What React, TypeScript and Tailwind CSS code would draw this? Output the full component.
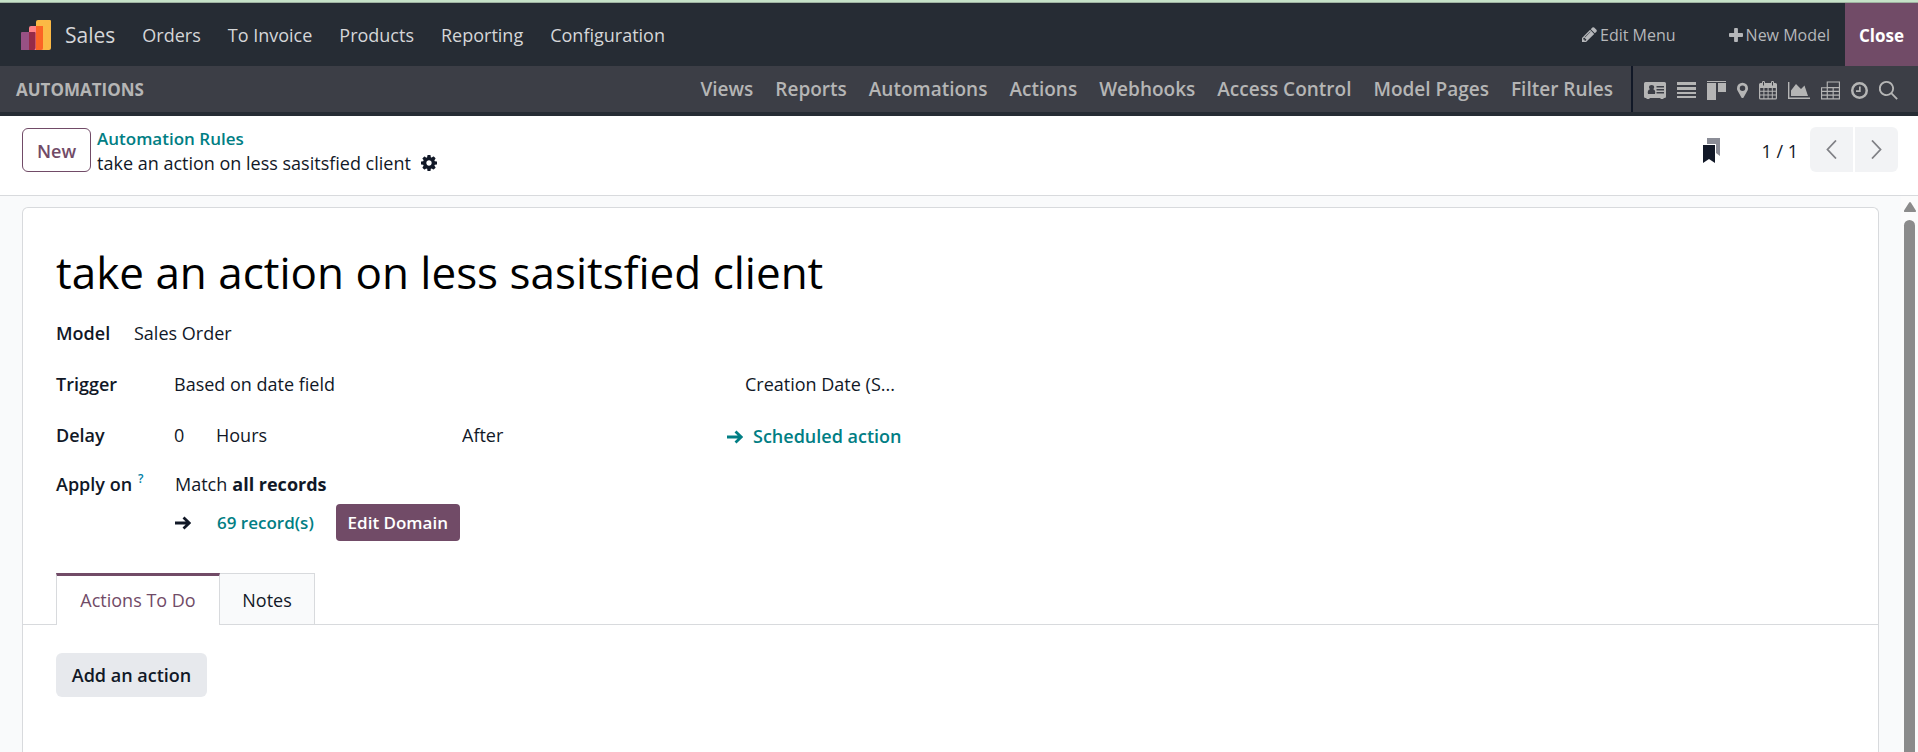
import type { ReactNode } from "react"

const menus = ["Orders", "To Invoice", "Products", "Reporting", "Configuration"]

const studioMenus = [
  "Views",
  "Reports",
  "Automations",
  "Actions",
  "Webhooks",
  "Access Control",
  "Model Pages",
  "Filter Rules",
]

const views: { name: string; width: string; viewBox: string; icon: ReactNode }[] = [
  {
    name: "Form",
    width: "w-[22px]",
    viewBox: "0 0 22 19",
    icon: (
      <path
        fillRule="evenodd"
        d="M1.5 1h19A1.5 1.5 0 0 1 22 2.500v13a1.500 1.500 0 0 1-1.500 1.500h-1v1h-3v-1h-11v1h-3v-1h-1A1.500 1.500 0 0 1 0 15.500v-13A1.500 1.500 0 0 1 1.500 1zM4 13h7c.8-2.600-.3-4.400-1.800-4.700.7-.6 1-1.300 1-2C10.200 4.900 9.100 4 7.600 4S5 4.900 5 6.300c0 .7.300 1.400 1 2-1.600.3-2.800 2.100-2 4.700zM12.500 5v1.500H20V5zm0 3v1.500H20V8zm0 3v1.500H20V11z"
      />
    ),
  },
  {
    name: "List",
    width: "w-[19px]",
    viewBox: "0 0 19 19",
    icon: <path d="M0 1h19v3H0zM0 6h19v3H0zM0 11h19v2H0zM0 15h19v2H0z" />,
  },
  {
    name: "Kanban",
    width: "w-[19px]",
    viewBox: "0 0 19 19",
    icon: <path d="M0 0h19v1H0zM0 2h9v17H0zM11 2h8v9h-8z" />,
  },
  {
    name: "Map",
    width: "w-[11px]",
    viewBox: "0 0 12 19",
    icon: (
      <path
        fillRule="evenodd"
        d="M6 1a6 6 0 0 1 6 6c0 1-.1 1.600-.4 2.200L7.200 17a1.400 1.400 0 0 1-2.400 0L.4 9.200C.1 8.600 0 8 0 7a6 6 0 0 1 6-6zm0 3a3 3 0 1 0 0 6 3 3 0 0 0 0-6z"
      />
    ),
  },
  {
    name: "Calendar",
    width: "w-[18px]",
    viewBox: "0 0 18 19",
    icon: (
      <path
        fillRule="evenodd"
        d="M1.500 2H3V1.300C3 .5 3.700 0 4.500 0S6 .5 6 1.300V2h6v-.7c0-.8.7-1.300 1.500-1.300S15 .5 15 1.300V2h1.500A1.500 1.500 0 0 1 18 3.500v13.500a1.500 1.500 0 0 1-1.500 1.500h-15A1.500 1.500 0 0 1 0 17V3.500A1.500 1.500 0 0 1 1.500 2zM4 1v3.500h1V1zm9 0v3.500h1V1zM1.200 7v2.800h3.200V7zm4.200 0v2.800h3.200V7zm4.200 0v2.800h3.200V7zm4.200 0v2.800h3V7zM1.200 10.800v2.600h3.200v-2.600zm4.200 0v2.600h3.200v-2.600zm4.200 0v2.600h3.200v-2.600zm4.200 0v2.600h3v-2.600zM1.200 14.400v2.800h3.200v-2.800zm4.200 0v2.800h3.200v-2.800zm4.200 0v2.800h3.200v-2.800zm4.200 0v2.800h3v-2.800z"
      />
    ),
  },
  {
    name: "Graph",
    width: "w-[22px]",
    viewBox: "0 0 22 19",
    icon: <path d="M0 1h1.400v15.600H22V18H0zM3 15V9.500L8 3l5 5 3.500-3.500L20 15z" />,
  },
  {
    name: "Pivot",
    width: "w-[19px]",
    viewBox: "0 0 20 19",
    icon: (
      <path
        fillRule="evenodd"
        d="M6 0h14v19H0V6h6zm1.200 1.200v4.500h11.600V1.200zM1.200 7v2.800H6V7zm6 0v2.800h5V7zm6.200 0v2.800h5.400V7zM1.200 11v2.700H6V11zm6 0v2.700h5V11zm6.200 0v2.700h5.400V11zM1.200 14.900v2.700H6v-2.700zm6 0v2.700h5v-2.700zm6.200 0v2.700h5.400v-2.700z"
      />
    ),
  },
  {
    name: "Activity",
    width: "w-[17px]",
    viewBox: "0 0 17 19",
    icon: (
      <path
        fillRule="evenodd"
        d="M8.500 1a8.500 8.500 0 1 1 0 17 8.500 8.500 0 0 1 0-17zm0 2.500a6 6 0 1 0 0 12 6 6 0 0 0 0-12zM8 5.500h1.700V11H5V9.300h3z"
      />
    ),
  },
  {
    name: "Search",
    width: "w-[19px]",
    viewBox: "0 0 19 19",
    icon: (
      <path
        fillRule="evenodd"
        d="M7.500 0a7.500 7.500 0 0 1 5.900 12.100l5.400 5.300-1.300 1.300-5.400-5.400A7.500 7.500 0 1 1 7.500 0zm0 1.800a5.700 5.700 0 1 0 0 11.400 5.700 5.700 0 0 0 0-11.400z"
      />
    ),
  },
]

function SalesLogo() {
  return (
    <svg className="h-[30px] w-[30px]" viewBox="0 0 30 30" aria-hidden="true">
      <path d="M17 0h12a1 1 0 0 1 1 1v27a2 2 0 0 1-2 2H15V2a2 2 0 0 1 2-2z" fill="#fbb945" />
      <path d="M10 6h12v22a2 2 0 0 1-2 2H8V8a2 2 0 0 1 2-2z" fill="#ff8087" />
      <path d="M15 6h7v22a2 2 0 0 1-2 2h-5z" fill="#fb6425" />
      <path d="M1 12h13v16a2 2 0 0 1-2 2H0V13a1 1 0 0 1 1-1z" fill="#985184" />
      <path d="M8 12h5.500a1 1 0 0 1 1 1v15a2 2 0 0 1-2 2H8z" fill="#962b48" />
    </svg>
  )
}

function PencilIcon() {
  return (
    <svg className="h-[15px] w-[15px]" viewBox="128 128 1536 1536" fill="currentColor" aria-hidden="true">
      <path d="M491 1536l91-91-235-235-91 91v107h128v128h107zm523-928q0-22-22-22-10 0-17 7l-542 542q-7 7-7 17 0 22 22 22 10 0 17-7l542-542q7-7 7-17zm-54-192l416 416-832 832h-416v-416zm683 96q0 53-37 90l-166 166-416-416 166-165q36-38 90-38 53 0 91 38l235 234q37 39 37 91z" />
    </svg>
  )
}

function PlusIcon() {
  return (
    <svg className="h-3.5 w-3.5" viewBox="192 128 1408 1408" fill="currentColor" aria-hidden="true">
      <path d="M1600 736v192q0 40-28 68t-68 28h-416v416q0 40-28 68t-68 28h-192q-40 0-68-28t-28-68v-416h-416q-40 0-68-28t-28-68v-192q0-40 28-68t68-28h416v-416q0-40 28-68t68-28h192q40 0 68 28t28 68v416h416q40 0 68 28t28 68z" />
    </svg>
  )
}

function CogIcon() {
  return (
    <svg className="h-4 w-4" viewBox="128 128 1536 1536" fill="currentColor" aria-hidden="true">
      <path d="M1152 896q0-106-75-181t-181-75-181 75-75 181 75 181 181 75 181-75 75-181zm512-109v222q0 12-8 23t-20 13l-185 28q-19 54-39 91 35 50 107 138 10 12 10 25t-9 23q-27 37-99 108t-94 71q-12 0-26-9l-138-108q-44 23-91 38-16 136-29 186-7 28-36 28h-222q-14 0-24.500-8.500t-11.500-21.500l-28-184q-49-16-90-37l-141 107q-10 9-25 9-14 0-25-11-126-114-165-168-7-10-7-23 0-12 8-23 15-21 51-66.500t54-70.500q-27-50-41-99l-183-27q-13-2-21-12.500t-8-23.500v-222q0-12 8-23t19-13l186-28q14-46 39-92-40-57-107-138-10-12-10-24 0-10 9-23 26-36 98.500-107.500t94.500-71.500q13 0 26 10l138 107q44-23 91-38 16-136 29-186 7-28 36-28h222q14 0 24.500 8.500t11.500 21.500l28 184q49 16 90 37l142-107q9-9 24-9 13 0 25 10 129 119 165 170 7 8 7 22 0 12-8 23-15 21-51 66.500t-54 70.500q26 50 41 98l183 28q13 2 21 12.500t8 23.500z" />
    </svg>
  )
}

function ArrowIcon() {
  return (
    <svg
      className="h-[14px] w-4"
      viewBox="0 0 16 14"
      fill="none"
      stroke="currentColor"
      strokeWidth="2.8"
      aria-hidden="true"
    >
      <path d="M0 7h14M8.500 1.500L14.300 7l-5.800 5.500" />
    </svg>
  )
}

function Chevron({ d }: { d: string }) {
  return (
    <svg
      className="h-[19px] w-[11px]"
      viewBox="0 0 11 19"
      fill="none"
      stroke="currentColor"
      strokeWidth="1.8"
      aria-hidden="true"
    >
      <path d={d} />
    </svg>
  )
}

function Navbar() {
  return (
    <header className="flex h-[63px] items-stretch bg-[#262c34] text-[#d5d6d8]">
      <nav className="flex items-center pt-px pl-[21px] text-[18px]">
        <SalesLogo />
        <a href="#sales" className="mr-[27px] ml-[14px] pt-px text-[21px]">
          Sales
        </a>
        <div className="flex gap-[27px]">
          {menus.map((menu) => (
            <a key={menu} href="#menu">
              {menu}
            </a>
          ))}
        </div>
      </nav>
      <div className="ml-auto flex items-stretch text-base text-[#b5b7ba]">
        <button className="mr-[53px] flex items-center gap-[3px]">
          <PencilIcon />
          Edit Menu
        </button>
        <button className="mr-[15px] flex items-center gap-[3px]">
          <PlusIcon />
          New Model
        </button>
        <button className="w-[73px] bg-[#714b67] pt-[2px] text-[17px] font-bold text-white">Close</button>
      </div>
    </header>
  )
}

function StudioBar() {
  return (
    <div className="flex h-[50px] items-stretch border-b-4 border-[#262c34] bg-[#3c3e46] text-[#b5b5b5]">
      <span className="flex items-center pt-px pl-4 text-[17px] font-bold">AUTOMATIONS</span>
      <nav className="ml-auto flex items-center gap-[22px] pr-[18px] text-[19px] font-semibold">
        {studioMenus.map((menu) => (
          <a key={menu} href="#studio">
            {menu}
          </a>
        ))}
      </nav>
      <div className="flex items-center gap-[11px] border-l-2 border-[#111827] pt-[2px] pr-5 pl-[11px]">
        {views.map((view) => (
          <button key={view.name} aria-label={view.name}>
            <svg className={`h-[19px] ${view.width}`} viewBox={view.viewBox} fill="currentColor">
              {view.icon}
            </svg>
          </button>
        ))}
      </div>
    </div>
  )
}

function ControlPanel() {
  return (
    <div className="flex h-20 items-start border-b border-[#d8dadd] bg-white pr-5 pl-[22px]">
      <button className="mt-3 h-11 w-[69px] rounded-md border border-[#714b67] pt-[2px] text-[18px] font-semibold text-[#714b67]">
        New
      </button>
      <div className="mt-[11px] ml-[6px] leading-6">
        <a href="#rules" className="block text-[17px] font-semibold text-[#017e84]">
          Automation Rules
        </a>
        <div className="flex items-center gap-[10px] text-[18px]">
          <span>take an action on less sasitsfied client</span>
          <button aria-label="Actions">
            <CogIcon />
          </button>
        </div>
      </div>
      <div className="mt-[11px] ml-auto flex items-center text-[18px]">
        <button aria-label="Knowledge" className="mr-10 pt-[3px]">
          <svg className="h-[26px] w-[18px]" viewBox="0 0 18 26" aria-hidden="true">
            <path d="M4 0h13v18l-4-3V6H4z" fill="#8b8d97" />
            <path d="M0 7h12v18l-6-4-6 4z" fill="#111827" />
          </svg>
        </button>
        <span className="mr-3 pt-[3px]">1 / 1</span>
        <div className="flex gap-[2px] text-[#808186]">
          <button
            aria-label="Previous"
            className="flex h-[45px] w-[43px] items-center justify-center rounded-l-md bg-[#f2f3f5]"
          >
            <Chevron d="M10 .5L1.500 9.500l8.500 9" />
          </button>
          <button
            aria-label="Next"
            className="flex h-[45px] w-[43px] items-center justify-center rounded-r-md bg-[#f2f3f5]"
          >
            <Chevron d="M1 .5l8.500 9-8.500 9" />
          </button>
        </div>
      </div>
    </div>
  )
}

function RuleForm() {
  return (
    <form className="px-[33px]">
      <input
        aria-label="Name"
        defaultValue="take an action on less sasitsfied client"
        className="mt-8 block h-16 w-full text-[44px] text-black"
      />

      <div className="mt-[9px] flex h-10 items-center">
        <label htmlFor="model" className="w-[78px] font-semibold">
          Model
        </label>
        <input id="model" defaultValue="Sales Order" className="w-60" />
      </div>

      <div className="mt-[11px] flex h-10 items-center">
        <label htmlFor="trigger" className="w-[118px] font-semibold">
          Trigger
        </label>
        <select id="trigger" className="w-[571px] appearance-none">
          <option>Based on date field</option>
        </select>
        <input aria-label="Date field" defaultValue="Creation Date (S..." className="w-40" />
      </div>

      <div className="mt-[11px] flex h-10 items-center">
        <label htmlFor="delay" className="w-[118px] font-semibold">
          Delay
        </label>
        <input id="delay" defaultValue="0" className="w-[42px]" />
        <select aria-label="Delay unit" className="w-[246px] appearance-none">
          <option>Hours</option>
        </select>
        <select aria-label="Delay mode" className="w-[265px] appearance-none">
          <option>After</option>
        </select>
        <button type="button" className="flex items-center gap-[10px] pt-[3px] font-semibold text-[#017e84]">
          <ArrowIcon />
          Scheduled action
        </button>
      </div>

      <div className="mt-[10px] flex items-start">
        <div className="flex h-[39px] w-[119px] items-center font-semibold">
          Apply on
          <sup className="ml-[6px] text-xs text-[#0180a5]">?</sup>
        </div>
        <div>
          <p className="flex h-[39px] items-center gap-[5px]">
            Match <b>all records</b>
          </p>
          <div className="flex items-center text-[17px] font-semibold">
            <ArrowIcon />
            <button type="button" className="mr-[22px] ml-[26px] text-[#017e84]">
              69 record(s)
            </button>
            <button type="button" className="h-[37px] w-[124px] rounded-sm bg-[#714b67] text-white">
              Edit Domain
            </button>
          </div>
        </div>
      </div>
    </form>
  )
}

function Notebook() {
  return (
    <div className="mt-8">
      <div role="tablist" className="flex items-end">
        <div className="w-[33px] border-b border-[#d8dadd]" />
        <button
          role="tab"
          aria-selected="true"
          className="h-[52px] w-[164px] border-x border-t-[3px] border-x-[#d8dadd] border-t-[#714b67] text-[#714b67]"
        >
          Actions To Do
        </button>
        <button
          role="tab"
          aria-selected="false"
          className="h-[52px] w-[95px] border-y border-r border-[#d8dadd] bg-[#f9fafb] pt-[2px]"
        >
          Notes
        </button>
        <div className="flex-1 border-b border-[#d8dadd]" />
      </div>
      <div role="tabpanel" className="px-[33px] pt-7">
        <button className="h-11 w-[151px] rounded-md bg-[#e7e9ed] font-semibold">Add an action</button>
      </div>
    </div>
  )
}

export default function App() {
  return (
    <div className="flex h-screen flex-col overflow-hidden bg-white font-['Open_Sans','Noto_Sans',sans-serif] text-[#111827]">
      <div className="h-[3px] shrink-0 border-b border-[#9fb3a1] bg-[#c6e2c8]" />
      <Navbar />
      <StudioBar />
      <ControlPanel />
      <div className="flex min-h-0 flex-1 bg-[#f9fafb]">
        <main className="min-w-0 flex-1 overflow-hidden px-[22px] pt-[11px]">
          <div className="min-h-full rounded-t-md border border-b-0 border-[#d8dadd] bg-white text-[18px]">
            <RuleForm />
            <Notebook />
          </div>
        </main>
        {/* Scroll track */}
        <div className="flex w-[17px] flex-col items-center gap-2 bg-[#fbfbfb] pt-[6px]" aria-hidden="true">
          <svg className="h-[10px] w-3 shrink-0" viewBox="0 0 12 10" fill="#8b8b8b">
            <path d="M5 .8a1.200 1.200 0 0 1 2 0l4.700 7.500A1 1 0 0 1 11 10H1a1 1 0 0 1-.8-1.700z" />
          </svg>
          <div className="w-[11px] flex-1 rounded-t-full bg-[#8b8b8b]" />
        </div>
      </div>
    </div>
  )
}
